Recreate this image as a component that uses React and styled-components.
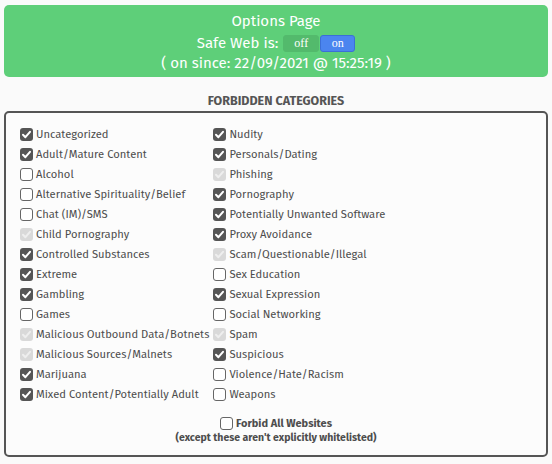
import React from "react";
import styled, { createGlobalStyle } from "styled-components";

const GlobalStyle = createGlobalStyle`
  body {
    margin: 0;
    background: #fafafa;
    font-family: "Fira Sans", Lato, "Liberation Sans", sans-serif;
  }
`;

const left = [
  ["Uncategorized", "on"],
  ["Adult/Mature Content", "on"],
  ["Alcohol", "off"],
  ["Alternative Spirituality/Belief", "off"],
  ["Chat (IM)/SMS", "off"],
  ["Child Pornography", "locked"],
  ["Controlled Substances", "on"],
  ["Extreme", "on"],
  ["Gambling", "on"],
  ["Games", "off"],
  ["Malicious Outbound Data/Botnets", "locked"],
  ["Malicious Sources/Malnets", "locked"],
  ["Marijuana", "on"],
  ["Mixed Content/Potentially Adult", "on"],
];

const right = [
  ["Nudity", "on"],
  ["Personals/Dating", "on"],
  ["Phishing", "locked"],
  ["Pornography", "on"],
  ["Potentially Unwanted Software", "on"],
  ["Proxy Avoidance", "on"],
  ["Scam/Questionable/Illegal", "locked"],
  ["Sex Education", "off"],
  ["Sexual Expression", "on"],
  ["Social Networking", "off"],
  ["Spam", "locked"],
  ["Suspicious", "on"],
  ["Violence/Hate/Racism", "off"],
  ["Weapons", "off"],
];

function Check({ state }) {
  return (
    <Box $state={state}>
      {state !== "off" && (
        <svg width="13" height="13" viewBox="0 0 13 13">
          <path
            d="M3 6.8 L5.4 9.2 L10 3.8"
            fill="none"
            stroke={state === "locked" ? "#eeeeee" : "#ffffff"}
            strokeWidth="2"
            strokeLinecap="round"
            strokeLinejoin="round"
          />
        </svg>
      )}
    </Box>
  );
}

export default function App() {
  const rows = left.map((l, i) => [l, right[i]]);
  return (
    <Page>
      <GlobalStyle />
      <Header>
        <Title>Options Page</Title>
        <StatusLine>
          Safe Web is:
          <Toggle>
            <ToggleSide>off</ToggleSide>
            <ToggleSide $active>on</ToggleSide>
          </Toggle>
        </StatusLine>
        <Since>( on since: 22/09/2021 @ 15:25:19 )</Since>
      </Header>

      <SectionTitle>FORBIDDEN CATEGORIES</SectionTitle>
      <Panel>
        <Grid>
          {rows.map(([a, b]) => (
            <React.Fragment key={a[0]}>
              <Item>
                <Check state={a[1]} />
                {a[0]}
              </Item>
              <Item>
                <Check state={b[1]} />
                {b[0]}
              </Item>
            </React.Fragment>
          ))}
        </Grid>
        <ForbidAll>
          <Item>
            <Check state="off" />
            Forbid All Websites
          </Item>
          <Note>(except these aren't explicitly whitelisted)</Note>
        </ForbidAll>
      </Panel>
    </Page>
  );
}

const Page = styled.div`
  padding: 5px 4px 6px 4px;
`;

const Header = styled.div`
  background: #5ecf79;
  border-radius: 5px;
  color: #fff;
  text-align: center;
  padding: 6px 0 6px;
  font-size: 15px;
`;

const Title = styled.div`
  line-height: 20px;
`;

const StatusLine = styled.div`
  display: flex;
  justify-content: center;
  align-items: center;
  gap: 5px;
  height: 24px;
`;

const Toggle = styled.div`
  display: flex;
  gap: 1px;
`;

const ToggleSide = styled.span`
  box-sizing: border-box;
  font-family: "Liberation Serif", "DejaVu Serif", serif;
  font-size: 12px;
  line-height: 15px;
  width: ${(p) => (p.$active ? "35px" : "36px")};
  height: 17px;
  border-radius: 3px;
  text-align: center;
  background: ${(p) => (p.$active ? "#4b85ef" : "#53ba6c")};
  border: 1px solid ${(p) => (p.$active ? "#3b6fd6" : "#53ba6c")};
  color: #fff;
`;

const Since = styled.div`
  line-height: 16px;
`;

const SectionTitle = styled.div`
  margin-top: 16px;
  text-align: center;
  font-weight: 700;
  font-size: 12.5px;
  color: #555;
  line-height: 16px;
`;

const Panel = styled.div`
  margin-top: 2px;
  border: 2px solid #555;
  border-radius: 5px;
  padding: 11px 14px 10px;
  background: #fcfcfc;
`;

const Grid = styled.div`
  display: grid;
  grid-template-columns: auto auto;
  justify-content: start;
  column-gap: 4px;
`;

const Item = styled.label`
  display: flex;
  align-items: center;
  gap: 3px;
  height: 20px;
  font-size: 11.2px;
  color: #4d4d4d;
  white-space: nowrap;
`;

const Box = styled.span`
  box-sizing: border-box;
  width: 13px;
  height: 13px;
  border-radius: 3px;
  flex: none;
  display: inline-flex;
  background: ${(p) =>
    p.$state === "on" ? "#555" : p.$state === "locked" ? "#d9d9d9" : "#fff"};
  border: ${(p) => (p.$state === "off" ? "1px solid #666" : "none")};
  svg {
    display: block;
  }
`;

const ForbidAll = styled.div`
  margin-top: 12px;
  display: flex;
  flex-direction: column;
  align-items: center;
  font-weight: 700;
  color: #4d4d4d;

  ${Item} {
    height: 15px;
    font-size: 11px;
  }
`;

const Note = styled.div`
  font-size: 10.5px;
  line-height: 14px;
`;
